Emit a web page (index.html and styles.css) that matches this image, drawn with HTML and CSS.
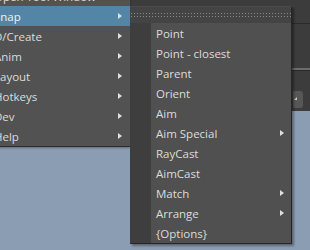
FILE: index.html
```html
<!DOCTYPE html>
<html lang="en">

<head>
  <meta charset="UTF-8">
  <title>Snap menu</title>
  <link rel="stylesheet" href="styles.css">
</head>

<body>

  <div class="panel">
    <div class="panel-head"></div>
    <div class="panel-line"></div>
    <div class="dropdown"><span class="corner"></span></div>
  </div>
  <div class="viewport"></div>

  <div class="menu main-menu">
    <div class="item">Open Tool Window</div>
    <div class="item active">Snap <span class="arrow"></span></div>
    <div class="item">D/Create <span class="arrow"></span></div>
    <div class="item">Anim <span class="arrow"></span></div>
    <div class="item">Layout <span class="arrow"></span></div>
    <div class="item">Hotkeys <span class="arrow"></span></div>
    <div class="item">Dev <span class="arrow"></span></div>
    <div class="item">Help <span class="arrow"></span></div>
  </div>

  <div class="menu sub-menu">
    <div class="tearoff">
      <div class="dots"></div>
      <div class="dots"></div>
    </div>
    <div class="sub-body">
      <div class="gutter"></div>
      <div class="items">
        <div class="item">Point</div>
        <div class="item">Point - closest</div>
        <div class="item">Parent</div>
        <div class="item">Orient</div>
        <div class="item">Aim</div>
        <div class="item">Aim Special <span class="arrow"></span></div>
        <div class="item">RayCast</div>
        <div class="item">AimCast</div>
        <div class="item">Match <span class="arrow"></span></div>
        <div class="item">Arrange <span class="arrow"></span></div>
        <div class="item">{Options}</div>
      </div>
    </div>
  </div>

</body>

</html>
```

FILE: styles.css
```css
* {
  margin: 0;
  padding: 0;
  box-sizing: border-box;
}

body {
  width: 310px;
  height: 250px;
  overflow: hidden;
  position: relative;
  background: #8b9db3;
  font-family: "Open Sans", "Liberation Sans", sans-serif;
  font-size: 11.5px;
  color: #dcdcdc;
}

/* window behind the menus */
.panel {
  height: 111px;
  background: #3c3c3c;
  display: flex;
  flex-direction: column;
}

.panel-head {
  height: 24px;
  border-bottom: 1px solid #2a2a2a;
}

.panel-line {
  margin-top: 44px;
  height: 3px;
  border-top: 2px solid #6c6c6c;
  border-bottom: 1px solid #2a2a2a;
}

.dropdown {
  width: 10px;
  height: 17px;
  margin: 20px 7px 0 auto;
  background: #575757;
  border-radius: 0 3px 3px 0;
}

.dropdown .corner {
  display: block;
  width: 0;
  height: 0;
  margin: 6px 0 0 1px;
  border-right: 3px solid #c8c8c8;
  border-top: 3px solid transparent;
}

/* menus */
.menu {
  position: absolute;
}

.item {
  height: 20px;
  display: flex;
  align-items: center;
  justify-content: space-between;
  white-space: nowrap;
}

.arrow {
  width: 0;
  height: 0;
  border-left: 4px solid #e0e0e0;
  border-top: 3px solid transparent;
  border-bottom: 3px solid transparent;
}

.main-menu {
  left: -14px;
  top: -14px;
  width: 144px;
  background: #525252;
  border-bottom: 1px solid #2c2c2c;
  box-shadow: 0 1px 2px rgba(0, 0, 0, 0.3);
}

.main-menu .item {
  padding: 0 8px;
}

.main-menu .item.active {
  background: #5285a6;
  color: #f2f2f2;
}

.sub-menu {
  left: 130px;
  top: 6px;
  width: 162px;
  border-top: 1px solid #4a4a4a;
  border-right: 1px solid #262626;
  border-bottom: 1px solid #262626;
  box-shadow: 2px 2px 2px rgba(0, 0, 0, 0.35);
}

.tearoff {
  height: 16px;
  padding: 6px 0 0 1px;
  background: #444;
}

.tearoff .dots {
  height: 1px;
  margin-bottom: 2px;
  background: repeating-linear-gradient(90deg, #8c8c8c 0 1px, transparent 1px 3px);
}

.sub-body {
  display: flex;
}

.sub-body .gutter {
  width: 21px;
  background: #3e3e3e;
}

.sub-body .items {
  flex: 1;
  background: #505050;
}

.sub-body .item {
  padding: 0 7px 0 5px;
}
```
